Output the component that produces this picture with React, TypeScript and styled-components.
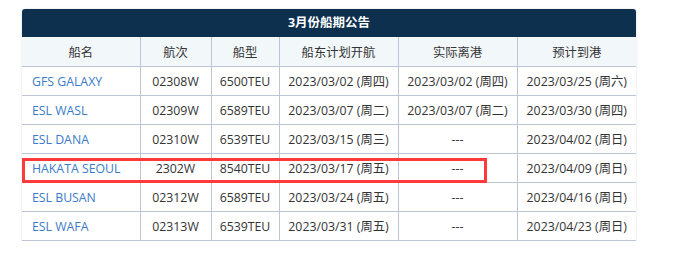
import React from "react";
import styled, { createGlobalStyle } from "styled-components";

const GlobalStyle = createGlobalStyle`
    html, body {
        margin: 0;
        padding: 0;
        background: #ffffff;
        font-family: "Open Sans", "Noto Sans CJK SC", sans-serif;
    }
`;

const rows = [
    { name: "GFS GALAXY", voyage: "02308W", size: "6500TEU", plan: "2023/03/02 (周四)", actual: "2023/03/02 (周四)", eta: "2023/03/25 (周六)" },
    { name: "ESL WASL", voyage: "02309W", size: "6589TEU", plan: "2023/03/07 (周二)", actual: "2023/03/07 (周二)", eta: "2023/03/30 (周四)" },
    { name: "ESL DANA", voyage: "02310W", size: "6539TEU", plan: "2023/03/15 (周三)", actual: "---", eta: "2023/04/02 (周日)" },
    { name: "HAKATA SEOUL", voyage: "2302W", size: "8540TEU", plan: "2023/03/17 (周五)", actual: "---", eta: "2023/04/09 (周日)" },
    { name: "ESL BUSAN", voyage: "02312W", size: "6589TEU", plan: "2023/03/24 (周五)", actual: "---", eta: "2023/04/16 (周日)" },
    { name: "ESL WAFA", voyage: "02313W", size: "6539TEU", plan: "2023/03/31 (周五)", actual: "---", eta: "2023/04/23 (周日)" },
];

const colWidths = [118, 71, 68, 119, 119, 119];
const heads = ["船名", "航次", "船型", "船东计划开航", "实际离港", "预计到港"];

const App = () => {
    return (
        <>
            <GlobalStyle />
            <Page>
                <Wrap>
                    <Title>3月份船期公告</Title>
                    <Table>
                        <colgroup>
                            {colWidths.map((w, i) => (
                                <col key={i} style={{ width: w }} />
                            ))}
                        </colgroup>
                        <thead>
                            <tr>
                                {heads.map((h) => (
                                    <Th key={h}>{h}</Th>
                                ))}
                            </tr>
                        </thead>
                        <tbody>
                            {rows.map((r) => (
                                <tr key={r.name}>
                                    <NameCell>{r.name}</NameCell>
                                    <Td>{r.voyage}</Td>
                                    <Td>{r.size}</Td>
                                    <Td>{r.plan}</Td>
                                    <Td>{r.actual}</Td>
                                    <Td>{r.eta}</Td>
                                </tr>
                            ))}
                        </tbody>
                    </Table>
                    <Mark />
                </Wrap>
            </Page>
        </>
    );
};

export default App;

const Page = styled.div`
    padding: 9px 0 0 22px;
`;

const Wrap = styled.div`
    position: relative;
    width: 614px;
    border-radius: 3px 3px 0 0;
    box-shadow: 0 0 2px rgba(0, 0, 0, 0.18);
`;

const Title = styled.div`
    height: 28px;
    line-height: 28px;
    background: #0d304e;
    color: #ffffff;
    font-size: 12.5px;
    font-weight: bold;
    text-align: center;
    border-radius: 3px 3px 0 0;
`;

const Table = styled.table`
    width: 614px;
    border-collapse: collapse;
    table-layout: fixed;
    font-size: 12.3px;
    color: #333333;
`;

const Th = styled.th`
    height: 29px;
    padding: 0;
    background: #f2f7fa;
    font-weight: normal;
    color: #333333;
    text-align: center;
    border-left: 1px solid #bcc6d6;
    border-bottom: 1px solid #bcc6d6;
    &:first-child {
        border-left: none;
    }
`;

const Td = styled.td`
    height: 28px;
    padding: 0;
    text-align: center;
    white-space: nowrap;
    border-left: 1px solid #bcc6d6;
    border-bottom: 1px solid #bcc6d6;
`;

const NameCell = styled(Td)`
    text-align: left;
    padding-left: 10px;
    color: #3b7bc8;
    border-left: none;
`;

const Mark = styled.div`
    position: absolute;
    left: 0;
    top: 149px;
    width: 465px;
    height: 25px;
    box-sizing: border-box;
    border: 3px solid #ff3a3a;
    pointer-events: none;
`;
